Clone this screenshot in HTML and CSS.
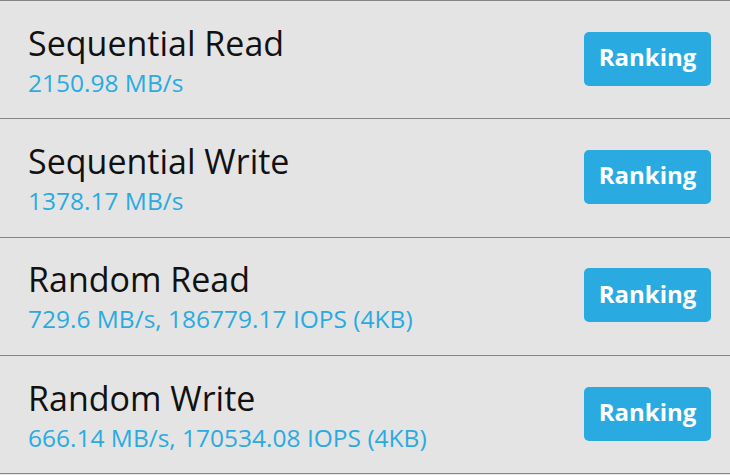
FILE: index.html
```html
<!DOCTYPE html>
<html lang="en">
<head>
    <meta charset="UTF-8">
    <meta name="viewport" content="width=device-width, initial-scale=1.0">
    <title>Benchmark Results</title>
    <link rel="stylesheet" href="styles.css">
</head>
<body>
    <ul class="results">
        <li class="result">
            <div class="result-info">
                <div class="result-name">Sequential Read</div>
                <div class="result-value">2150.98 MB/s</div>
            </div>
            <button class="ranking-btn">Ranking</button>
        </li>
        <li class="result">
            <div class="result-info">
                <div class="result-name">Sequential Write</div>
                <div class="result-value">1378.17 MB/s</div>
            </div>
            <button class="ranking-btn">Ranking</button>
        </li>
        <li class="result">
            <div class="result-info">
                <div class="result-name">Random Read</div>
                <div class="result-value">729.6 MB/s, 186779.17 IOPS (4KB)</div>
            </div>
            <button class="ranking-btn">Ranking</button>
        </li>
        <li class="result">
            <div class="result-info">
                <div class="result-name">Random Write</div>
                <div class="result-value">666.14 MB/s, 170534.08 IOPS (4KB)</div>
            </div>
            <button class="ranking-btn">Ranking</button>
        </li>
    </ul>
</body>
</html>
```

FILE: styles.css
```css
:root {
    --bg-color: #e4e4e4;
    --line-color: #858585;
    --accent-color: #29abe2;
    --text-color: #111;
}

body {
    margin: 0;
    background-color: var(--bg-color);
    font-family: 'Open Sans', 'DejaVu Sans', sans-serif;
    color: var(--text-color);
}

.results {
    list-style: none;
    margin: 0;
    padding: 0;
    border-top: 1.5px solid var(--line-color);
}

.result {
    display: flex;
    align-items: center;
    justify-content: space-between;
    height: 118.3px;
    padding: 2px 19px 0 28px;
    border-bottom: 1.5px solid var(--line-color);
    box-sizing: border-box;
}

.result-name {
    font-size: 34px;
    line-height: 40px;
}

.result-value {
    font-size: 24.5px;
    line-height: 32px;
    margin-top: 4px;
    color: var(--accent-color);
}

.ranking-btn {
    width: 127px;
    height: 54px;
    margin-bottom: 4px;
    border: none;
    border-radius: 5px;
    background-color: var(--accent-color);
    color: white;
    font-family: inherit;
    font-size: 24px;
    font-weight: bold;
    padding: 0 0 4px;
    cursor: pointer;
}
```
